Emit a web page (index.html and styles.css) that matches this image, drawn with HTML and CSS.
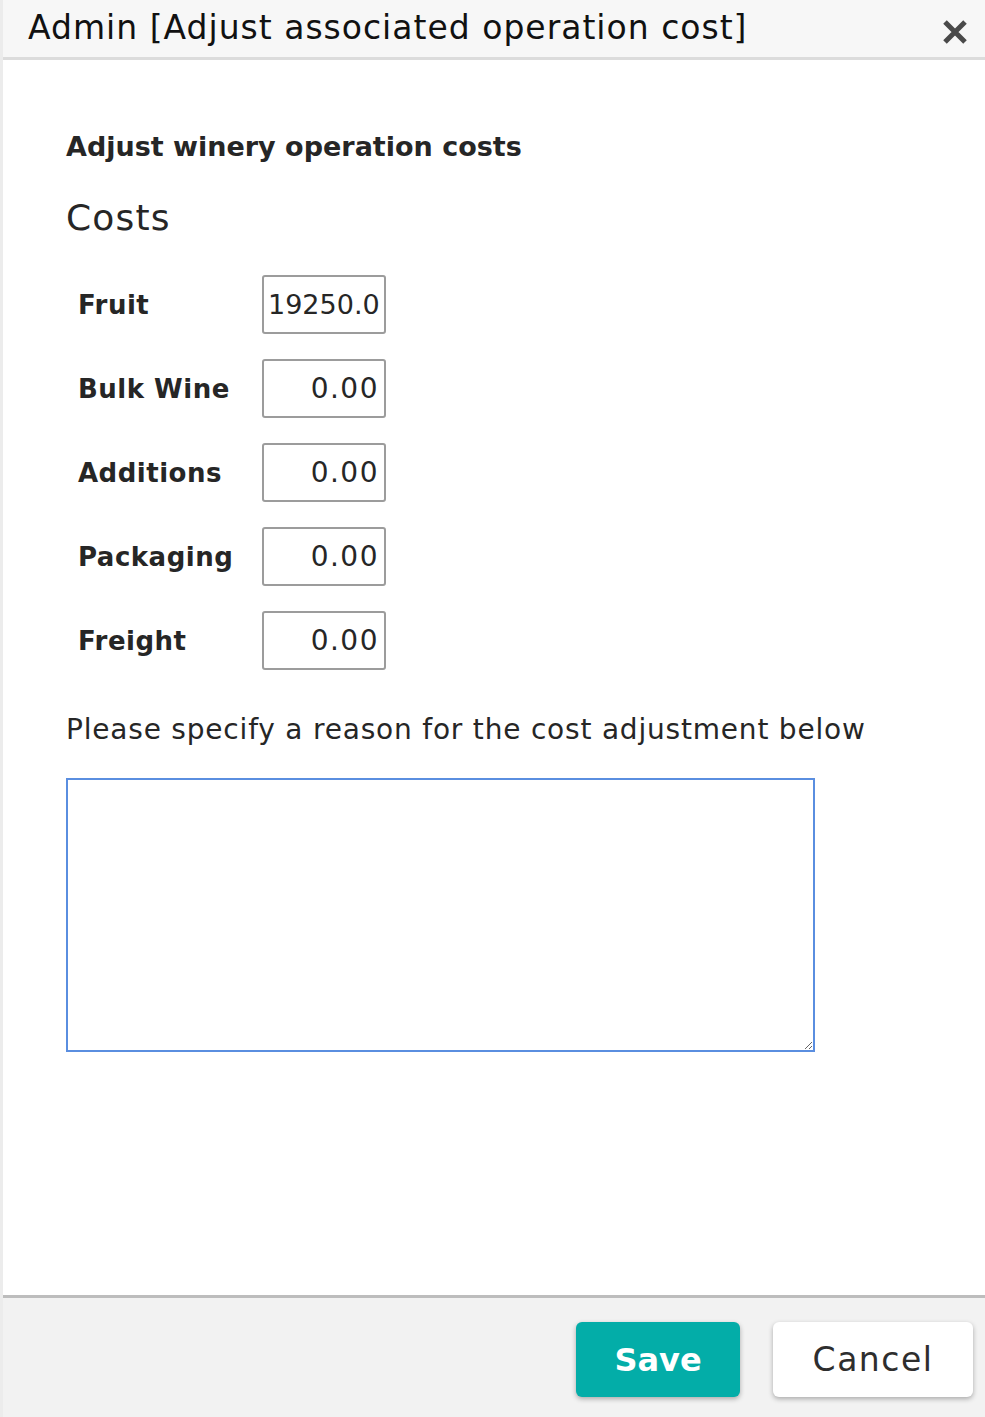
FILE: index.html
```html
<!DOCTYPE html>
<html>
<head>
<meta charset="utf-8">
<link rel="stylesheet" href="styles.css">
</head>
<body>
<div class="dialog">
  <div class="header">
    <div class="title">Admin [Adjust associated operation cost]</div>
    <div class="close" aria-label="close">
      <svg width="26" height="26" viewBox="0 0 26 26"><path d="M3 3 L23 23 M23 3 L3 23" stroke="#4a4a4a" stroke-width="5" stroke-linecap="butt"/></svg>
    </div>
  </div>
  <div class="content">
    <h3 class="subtitle">Adjust winery operation costs</h3>
    <h2 class="section">Costs</h2>
    <div class="costs">
      <div class="row"><label class="label">Fruit</label><input class="num num-left" type="text" value="19250.00"></div>
      <div class="row"><label class="label">Bulk Wine</label><input class="num" type="text" value="0.00"></div>
      <div class="row"><label class="label">Additions</label><input class="num" type="text" value="0.00"></div>
      <div class="row"><label class="label">Packaging</label><input class="num" type="text" value="0.00"></div>
      <div class="row"><label class="label">Freight</label><input class="num" type="text" value="0.00"></div>
    </div>
    <p class="reason">Please specify a reason for the cost adjustment below</p>
    <textarea class="reason-box"></textarea>
  </div>
  <div class="footer">
    <button class="btn save">Save</button>
    <button class="btn cancel">Cancel</button>
  </div>
</div>
</body>
</html>
```
FILE: styles.css
```css
html, body {
  margin: 0;
  padding: 0;
  height: 100%;
}
body {
  background: #ececec;
  font-family: "DejaVu Sans", "Open Sans", sans-serif;
  color: #262626;
}
.dialog {
  margin-left: 3px;
  height: 1417px;
  background: #fff;
  display: flex;
  flex-direction: column;
}
.header {
  height: 57px;
  background: #f7f7f7;
  border-bottom: 3px solid #dcdcdc;
  display: flex;
  align-items: center;
  justify-content: space-between;
  padding: 0 17px 0 25px;
}
.title {
  font-size: 33px;
  color: #111;
  letter-spacing: 1px;
  margin-top: -2px;
}
.close {
  display: flex;
  margin-top: 6px;
}
.content {
  flex: 1;
  padding: 70px 0 0 63px;
}
.subtitle {
  margin: 0;
  font-size: 27px;
  font-weight: 700;
  line-height: 34px;
}
.section {
  margin: 34px 0 0;
  font-size: 36px;
  font-weight: 400;
  letter-spacing: 1.2px;
  line-height: 40px;
}
.costs {
  margin-top: 37px;
  display: flex;
  flex-direction: column;
  gap: 25px;
}
.row {
  display: flex;
  align-items: center;
}
.label {
  width: 184px;
  padding-left: 12px;
  font-size: 26px;
  font-weight: 700;
  letter-spacing: 0.5px;
}
.num {
  box-sizing: border-box;
  width: 124px;
  height: 59px;
  border: 2px solid #9c9c9c;
  border-radius: 3px;
  font-family: inherit;
  font-size: 28px;
  letter-spacing: 1.5px;
  color: #262626;
  text-align: right;
  padding: 0 5px 0 4px;
  outline: none;
}
.num-left {
  text-align: left;
  font-size: 27px;
  letter-spacing: 0;
}
.reason {
  margin: 43px 0 0;
  font-size: 28px;
  font-weight: 400;
  letter-spacing: 0.8px;
  line-height: 34px;
}
.reason-box {
  display: block;
  box-sizing: border-box;
  margin-top: 31px;
  width: 749px;
  height: 274px;
  border: 2px solid #5a8ee0;
  border-radius: 0;
  outline: none;
}
.footer {
  height: 122px;
  flex: none;
  box-sizing: border-box;
  border-top: 3px solid #bdbdbd;
  background: #f2f2f2;
  display: flex;
  justify-content: flex-end;
  align-items: flex-start;
  gap: 33px;
  padding: 24px 12px 0 0;
}
.btn {
  height: 75px;
  border: none;
  border-radius: 6px;
  font-family: inherit;
  box-shadow: 0 2px 5px rgba(0,0,0,0.3);
}
.save {
  width: 164px;
  background: #03ada8;
  color: #fff;
  font-size: 32px;
  font-weight: 700;
}
.cancel {
  width: 200px;
  background: #fff;
  color: #2e2e2e;
  font-size: 33px;
  letter-spacing: 1.5px;
}
```
